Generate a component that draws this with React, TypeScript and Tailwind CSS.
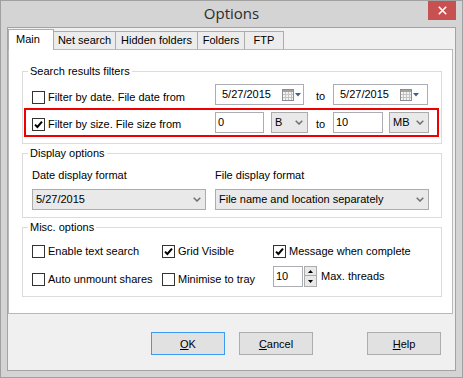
import type { ReactNode } from 'react';

const Check = ({ checked }: { checked?: boolean }) => (
  <span className="w-[13px] h-[13px] shrink-0 border border-[#333333] bg-white flex items-center justify-center">
    {checked && (
      <svg width="9" height="9" viewBox="0 0 9 9">
        <path d="M1 4.6L3.4 7L8 1.6" fill="none" stroke="#000" strokeWidth="2" />
      </svg>
    )}
  </span>
);

const CheckLabel = ({ checked, children, className = '' }: { checked?: boolean; children: ReactNode; className?: string }) => (
  <div className={`flex items-center h-[13px] shrink-0 ${className}`}>
    <Check checked={checked} />
    <span className="ml-[3px] whitespace-nowrap">{children}</span>
  </div>
);

const Chevron = () => (
  <svg width="8" height="5" viewBox="0 0 8 5">
    <path d="M0.7 0.7L4 4L7.3 0.7" fill="none" stroke="#6f6f6f" strokeWidth="1.5" />
  </svg>
);

const Select = ({ value, className = '' }: { value: string; className?: string }) => (
  <div className={`h-[21px] shrink-0 border border-[#acacac] bg-[#e9e9e9] flex items-center justify-between pl-[3px] pr-[4px] ${className}`}>
    <span className="whitespace-nowrap">{value}</span>
    <Chevron />
  </div>
);

const TextBox = ({ value, className = '' }: { value: string; className?: string }) => (
  <div className={`h-[21px] shrink-0 border border-[#abadb3] bg-white flex items-center pl-[2px] ${className}`}>
    {value}
  </div>
);

const CalendarIcon = () => (
  <svg width="12" height="12" viewBox="0 0 12 12">
    <rect x="0.5" y="0.5" width="11" height="11" fill="#f3f3f3" stroke="#8d8d8d" />
    <rect x="1" y="1" width="10" height="2" fill="#a2a2a2" />
    <path d="M3.5 3v8M6.5 3v8M9.5 3v8M1 5.5h10M1 8.5h10" stroke="#c4c4c4" />
  </svg>
);

const DateBox = ({ className = '' }: { className?: string }) => (
  <div className={`h-[21px] shrink-0 border border-[#abadb3] bg-white flex items-center pl-[6px] ${className}`}>
    <span>5/27/2015</span>
    <span className="ml-[11px]">
      <CalendarIcon />
    </span>
    <svg className="ml-[1px]" width="6" height="4" viewBox="0 0 6 4">
      <path d="M0 0H6L3 3.5Z" fill="#3e6189" />
    </svg>
  </div>
);

const Group = ({ title, children, className = '' }: { title: string; children: ReactNode; className?: string }) => (
  <fieldset className={`border border-[#dcdcdc] ml-[13px] mr-[10px] min-w-0 ${className}`}>
    <legend className="ml-[5px] px-[2px] leading-[13px]">{title}</legend>
    {children}
  </fieldset>
);

const Button = ({ letter, rest, focused, className = '' }: { letter: string; rest: string; focused?: boolean; className?: string }) => (
  <div
    className={`w-[74px] h-[23px] border bg-[#e1e1e1] flex items-center justify-center pt-[1px] ${
      focused ? 'border-[#3c9af0]' : 'border-[#adadad]'
    } ${className}`}
  >
    <span>
      <span className="underline underline-offset-[1px]">{letter}</span>
      {rest}
    </span>
  </div>
);

export default function App() {
  return (
    <div className="w-[463px] h-[378px] border border-[#a0a0a0] bg-[#d4d4d4] flex flex-col px-[6px] pb-[6px] font-['Liberation_Sans',Arial,sans-serif] text-[11px] leading-[13px] text-black">
      {/* Title bar */}
      <div className="h-[26px] shrink-0 grid grid-cols-[1fr_auto_1fr]">
        <div />
        <div className="pt-[2px] font-['Open_Sans',sans-serif] text-[15px] leading-[20px] text-[#2b2b2b]">Options</div>
        <div className="flex justify-end">
          <div className="w-[28px] h-[19px] bg-[#c75050] flex items-center justify-center">
            <svg width="9" height="9" viewBox="0 0 9 9">
              <path d="M0.8 0.8L8.2 8.2M8.2 0.8L0.8 8.2" stroke="#fff" strokeWidth="1.6" />
            </svg>
          </div>
        </div>
      </div>

      {/* Client area */}
      <div className="flex-1 border border-[#a3a3a3] bg-[#f0f0f0] flex flex-col pt-[1px]">
        {/* Tabs */}
        <div className="h-[20px] flex items-end shrink-0">
          <div className="relative z-10 w-[46px] h-[21px] -mb-px bg-white border-x border-t border-[#acacac] pl-[7px] pt-[3px]">Main</div>
          {[
            ['Net search', 'w-[63px]'],
            ['Hidden folders', 'w-[83px]'],
            ['Folders', 'w-[48px]'],
            ['FTP', 'w-[40px]'],
          ].map(([label, w]) => (
            <div key={label} className={`${w} h-[18px] -ml-px bg-[#ececec] border-x border-t border-[#acacac] flex justify-center pt-[2px] whitespace-nowrap`}>
              {label}
            </div>
          ))}
        </div>

        {/* Tab page */}
        <div className="h-[265px] mr-[2px] border border-[#b9b9b9] bg-white flex flex-col shrink-0">
          <Group title="Search results filters" className="mt-[15px] pt-[6px] pb-[6px]">
            <div className="flex items-start pl-[9px]">
              <CheckLabel className="w-[183px] mt-[7px]">Filter by date. File date from</CheckLabel>
              <DateBox className="w-[89px]" />
              <div className="w-[29px] pl-[12px] pt-[6px] shrink-0">to</div>
              <DateBox className="w-[95px]" />
            </div>
            <div className="mt-[3px] ml-[1px] mr-[2px] border-2 border-[#ee0000] flex items-start pl-[6px] py-[2px]">
              <CheckLabel checked className="w-[183px] mt-[6px]">Filter by size. File size from</CheckLabel>
              <TextBox value="0" className="w-[49px]" />
              <Select value="B" className="w-[37px] ml-[7px]" />
              <div className="w-[25px] pl-[8px] pt-[6px] shrink-0">to</div>
              <TextBox value="10" className="w-[50px]" />
              <Select value="MB" className="w-[40px] ml-[6px]" />
            </div>
          </Group>

          <Group title="Display options" className="mt-[3px] pt-[9px] pb-[7px]">
            <div className="flex pl-[9px]">
              <div className="w-[174px] flex flex-col">
                <div>Date display format</div>
                <Select value="5/27/2015" className="mt-[7px] pl-[2px]" />
              </div>
              <div className="w-[214px] ml-[9px] flex flex-col">
                <div>File display format</div>
                <Select value="File name and location separately" className="mt-[7px] pl-[3px]" />
              </div>
            </div>
          </Group>

          <Group title="Misc. options" className="mt-[3px] pt-[10px] pb-[9px]">
            <div className="flex flex-col gap-[7px] pl-[9px]">
              <div className="h-[15px] flex items-center">
                <CheckLabel className="w-[130px]">Enable text search</CheckLabel>
                <CheckLabel checked className="w-[111px]">Grid Visible</CheckLabel>
                <CheckLabel checked>Message when complete</CheckLabel>
              </div>
              <div className="h-[21px] flex items-start">
                <CheckLabel className="w-[130px] mt-[7px]">Auto unmount shares</CheckLabel>
                <CheckLabel className="w-[111px] mt-[7px]">Minimise to tray</CheckLabel>
                <TextBox value="10" className="w-[30px] pl-[2px]" />
                <div className="ml-[1px] w-[13px] h-[21px] flex flex-col shrink-0">
                  <div className="h-[10px] border border-[#acacac] bg-[#e9e9e9] flex items-center justify-center">
                    <svg width="5" height="3" viewBox="0 0 5 3">
                      <path d="M0 3L2.5 0L5 3Z" fill="#000" />
                    </svg>
                  </div>
                  <div className="h-[11px] border border-t-0 border-[#acacac] bg-[#e9e9e9] flex items-center justify-center">
                    <svg width="5" height="3" viewBox="0 0 5 3">
                      <path d="M0 0H5L2.5 3Z" fill="#000" />
                    </svg>
                  </div>
                </div>
                <div className="ml-[4px] mt-[4px] whitespace-nowrap">Max. threads</div>
              </div>
            </div>
          </Group>
        </div>

        {/* Buttons */}
        <div className="mt-[18px] flex justify-end pr-[14px]">
          <Button letter="O" rest="K" focused />
          <Button letter="C" rest="ancel" className="ml-[14px]" />
          <Button letter="H" rest="elp" className="ml-[54px]" />
        </div>
      </div>
    </div>
  );
}
